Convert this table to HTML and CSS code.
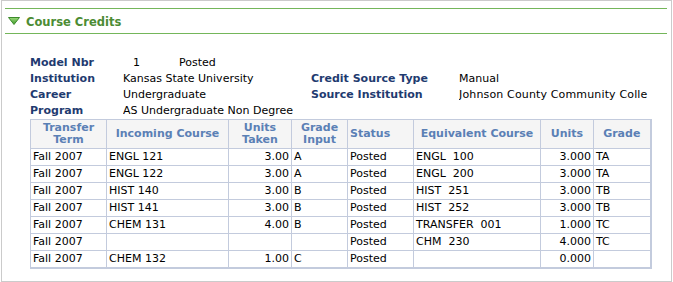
FILE: index.html
```html
<!DOCTYPE html>
<html>
<head>
<meta charset="utf-8">
<link rel="stylesheet" href="styles.css">
</head>
<body>
<div class="frame">
  <div class="section-head">
    <svg class="twisty" width="12" height="8" viewBox="0 0 12 8">
      <defs>
        <linearGradient id="g" x1="0" y1="0" x2="0" y2="1">
          <stop offset="0" stop-color="#9ad97a"/>
          <stop offset="1" stop-color="#3f9a2a"/>
        </linearGradient>
      </defs>
      <polygon points="0.5,0.5 11.5,0.5 6,7.5" fill="url(#g)" stroke="#3c8a2a" stroke-width="1"/>
    </svg>
    <span class="title">Course Credits</span>
  </div>

  <div class="fields">
    <div class="lbl">Model Nbr</div>
    <div class="val model"><span class="nbr">1</span><span>Posted</span></div>
    <div class="lbl"></div>
    <div class="val"></div>

    <div class="lbl">Institution</div>
    <div class="val">Kansas State University</div>
    <div class="lbl">Credit Source Type</div>
    <div class="val">Manual</div>

    <div class="lbl">Career</div>
    <div class="val">Undergraduate</div>
    <div class="lbl">Source Institution</div>
    <div class="val src">Johnson County Community Colle</div>

    <div class="lbl">Program</div>
    <div class="val">AS Undergraduate Non Degree</div>
    <div class="lbl"></div>
    <div class="val"></div>
  </div>

  <table class="grid">
    <colgroup>
      <col style="width:76px"><col style="width:122px"><col style="width:63px"><col style="width:56px">
      <col style="width:66px"><col style="width:127px"><col style="width:53px"><col style="width:57px">
    </colgroup>
    <thead>
      <tr>
        <th>Transfer<br>Term</th>
        <th>Incoming Course</th>
        <th>Units<br>Taken</th>
        <th>Grade<br>Input</th>
        <th class="left">Status</th>
        <th>Equivalent Course</th>
        <th>Units</th>
        <th>Grade</th>
      </tr>
    </thead>
    <tbody>
      <tr><td>Fall 2007</td><td>ENGL 121</td><td class="num">3.00</td><td>A</td><td>Posted</td><td class="pre">ENGL  100</td><td class="num">3.000</td><td>TA</td></tr>
      <tr><td>Fall 2007</td><td>ENGL 122</td><td class="num">3.00</td><td>A</td><td>Posted</td><td class="pre">ENGL  200</td><td class="num">3.000</td><td>TA</td></tr>
      <tr><td>Fall 2007</td><td>HIST 140</td><td class="num">3.00</td><td>B</td><td>Posted</td><td class="pre">HIST  251</td><td class="num">3.000</td><td>TB</td></tr>
      <tr><td>Fall 2007</td><td>HIST 141</td><td class="num">3.00</td><td>B</td><td>Posted</td><td class="pre">HIST  252</td><td class="num">3.000</td><td>TB</td></tr>
      <tr><td>Fall 2007</td><td>CHEM 131</td><td class="num">4.00</td><td>B</td><td>Posted</td><td class="pre">TRANSFER  001</td><td class="num">1.000</td><td>TC</td></tr>
      <tr><td>Fall 2007</td><td></td><td class="num"></td><td></td><td>Posted</td><td class="pre">CHM  230</td><td class="num">4.000</td><td>TC</td></tr>
      <tr><td>Fall 2007</td><td>CHEM 132</td><td class="num">1.00</td><td>C</td><td>Posted</td><td class="pre"></td><td class="num">0.000</td><td></td></tr>
    </tbody>
  </table>
</div>
</body>
</html>
```
FILE: styles.css
```css
html, body {
  margin: 0;
  padding: 0;
  background: #ffffff;
}
body {
  font-family: "DejaVu Sans", Verdana, sans-serif;
  font-size: 11px;
  color: #000000;
}
.frame {
  box-sizing: border-box;
  margin-left: 1px;
  width: 671px;
  height: 282px;
  border: 1px solid #cbcbcb;
  padding: 7px 4px 0 3px;
}
.section-head {
  display: flex;
  align-items: center;
  height: 24px;
  border-top: 1px solid #74b65a;
  border-bottom: 1px solid #74b65a;
}
.twisty {
  margin-left: 3px;
  margin-right: 6px;
  margin-top: 0;
}
.title {
  font-weight: bold;
  font-size: 11.5px;
  color: #4c8c34;
  padding-top: 2px;
}
.fields {
  display: grid;
  grid-template-columns: 93px 188px 148px 1fr;
  grid-auto-rows: 16px;
  margin: 20px 0 0 25px;
  align-items: center;
}
.lbl {
  font-weight: bold;
  color: #1f3b70;
  font-size: 11px;
}
.val {
  white-space: nowrap;
  overflow: hidden;
}
.val.src {
  letter-spacing: 0.15px;
}
.model .nbr {
  display: inline-block;
  width: 46px;
  padding-left: 10px;
}
.grid {
  margin: 1px 0 0 25px;
  border-collapse: collapse;
  table-layout: fixed;
  width: 620px;
  border-top: 1px solid #c3cbdd;
  border-left: 1px solid #c3cbdd;
  border-right: 2px solid #c3cbdd;
  border-bottom: 2px solid #c3cbdd;
}
.grid th {
  background: #f5f5f5;
  color: #5b80b5;
  font-weight: bold;
  font-size: 11px;
  line-height: 12px;
  height: 24px;
  padding: 2px 2px;
  border: 1px solid #c3cbdd;
  text-align: center;
}
.grid th.left {
  text-align: left;
}
.grid td {
  height: 16px;
  padding: 0 2px;
  line-height: 16px;
  border: 1px solid #c3cbdd;
  white-space: nowrap;
  overflow: hidden;
}
.grid td.num {
  text-align: right;
}
.grid td.pre {
  white-space: pre;
}
```
